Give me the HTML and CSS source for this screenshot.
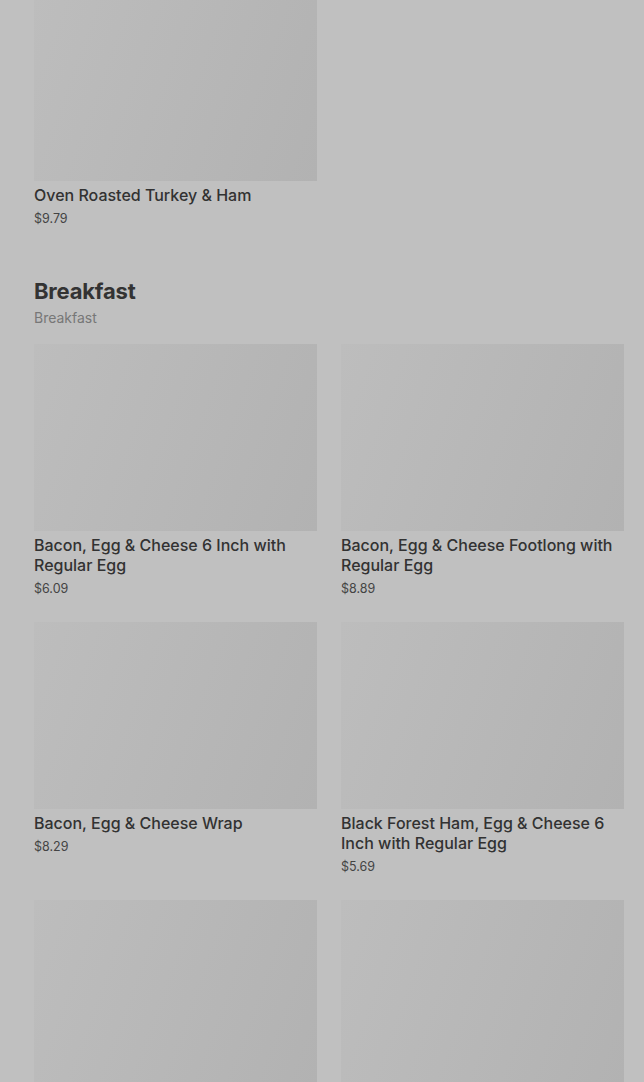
FILE: index.html
```html
<!DOCTYPE html>
<html lang="en">
<head>
<meta charset="utf-8">
<title>Menu</title>
<link rel="stylesheet" href="styles.css">
</head>
<body>
<main class="menu">
  <section class="section section-first">
    <div class="grid">
      <article class="item">
        <div class="thumb"></div>
        <h3 class="item-name">Oven Roasted Turkey &amp; Ham</h3>
        <p class="item-price">$9.79</p>
      </article>
    </div>
  </section>

  <section class="section">
    <header class="section-head">
      <h2 class="section-title">Breakfast</h2>
      <p class="section-sub">Breakfast</p>
    </header>
    <div class="grid">
      <article class="item">
        <div class="thumb"></div>
        <h3 class="item-name">Bacon, Egg &amp; Cheese 6 Inch with Regular Egg</h3>
        <p class="item-price">$6.09</p>
      </article>
      <article class="item">
        <div class="thumb"></div>
        <h3 class="item-name">Bacon, Egg &amp; Cheese Footlong with Regular Egg</h3>
        <p class="item-price">$8.89</p>
      </article>
      <article class="item">
        <div class="thumb"></div>
        <h3 class="item-name">Bacon, Egg &amp; Cheese Wrap</h3>
        <p class="item-price">$8.29</p>
      </article>
      <article class="item">
        <div class="thumb"></div>
        <h3 class="item-name">Black Forest Ham, Egg &amp; Cheese 6 Inch with Regular Egg</h3>
        <p class="item-price">$5.69</p>
      </article>
      <article class="item">
        <div class="thumb"></div>
      </article>
      <article class="item">
        <div class="thumb"></div>
      </article>
    </div>
  </section>
</main>
</body>
</html>
```

FILE: styles.css
```css
html, body {
  margin: 0;
  padding: 0;
  background: #c0c0c0;
  overflow: hidden;
}

body {
  font-family: Inter, Roboto, "Liberation Sans", sans-serif;
  color: #303030;
}

.menu {
  padding: 0 20px 0 34px;
  margin-top: -6px;
}

.section {
  display: flex;
  flex-direction: column;
}

.section + .section {
  margin-top: 49px;
}

.section-head {
  display: flex;
  flex-direction: column;
  margin-bottom: 16px;
}

.section-title {
  margin: 0;
  font-size: 22px;
  line-height: 28px;
  font-weight: 700;
  color: #333333;
  letter-spacing: -0.2px;
}

.section-sub {
  margin: 3px 0 0;
  font-size: 14px;
  line-height: 20px;
  color: #777777;
}

.grid {
  display: grid;
  grid-template-columns: 283px 283px;
  column-gap: 24px;
  row-gap: 24px;
}

.item {
  display: flex;
  flex-direction: column;
}

.thumb {
  height: 187px;
  background: linear-gradient(110deg, #bdbdbd 0%, #b8b8b8 45%, #b2b2b2 100%);
  margin-bottom: 4px;
}

.item-name {
  margin: 0;
  font-size: 16px;
  line-height: 20px;
  font-weight: 500;
  color: #323232;
}

.item-price {
  margin: 4px 0 0;
  font-size: 12.5px;
  line-height: 19px;
  color: #444444;
}
```
